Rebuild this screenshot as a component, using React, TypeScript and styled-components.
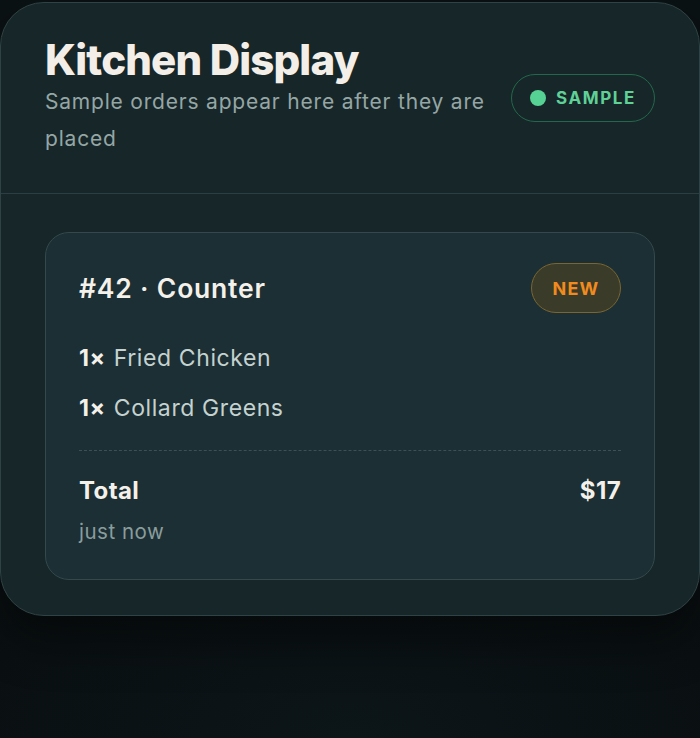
import React from "react";
import styled, { createGlobalStyle } from "styled-components";

const Global = createGlobalStyle`
  html, body { margin: 0; padding: 0; }
  body {
    background: #0a1012;
    font-family: Inter, "Open Sans", sans-serif;
    -webkit-font-smoothing: antialiased;
  }
`;

const Page = styled.div`
  min-height: 738px;
  padding-top: 2px;
  box-sizing: border-box;
  background: radial-gradient(120% 60% at 50% 100%, #0c1518 0%, #090e10 60%, #0b1214 100%);
`;

const Panel = styled.section`
  background: #172629;
  border: 1px solid #2f4245;
  border-radius: 44px;
  overflow: hidden;
  box-shadow: 0 24px 48px rgba(0, 0, 0, 0.45);
`;

const Header = styled.header`
  display: flex;
  align-items: flex-start;
  justify-content: space-between;
  gap: 24px;
  padding: 34px 44px 36px 44px;
  border-bottom: 1px solid #2c3e41;
`;

const TitleBlock = styled.div`
  display: flex;
  flex-direction: column;
  max-width: 450px;
`;

const Title = styled.h1`
  margin: 0;
  font-family: Inter, sans-serif;
  font-weight: 800;
  font-size: 42px;
  line-height: 46px;
  letter-spacing: -0.85px;
  color: #f3efe8;
`;

const Subtitle = styled.p`
  margin: 0;
  font-size: 21px;
  line-height: 37px;
  color: #95a6a5;
  letter-spacing: 0.8px;
`;

const SampleBadge = styled.div`
  display: flex;
  align-items: center;
  gap: 10px;
  margin-top: 37px;
  height: 46px;
  padding: 0 18px 0 18px;
  border: 1.5px solid #23684a;
  border-radius: 999px;
  color: #5fd197;
  font-weight: 700;
  font-size: 17px;
  letter-spacing: 1.6px;
  white-space: nowrap;
`;

const Dot = styled.span`
  width: 16px;
  height: 16px;
  border-radius: 50%;
  background: #56d294;
`;

const Body = styled.div`
  padding: 38px 44px 35px 44px;
`;

const Card = styled.article`
  background: #1c2f34;
  border: 1px solid #35494c;
  border-radius: 24px;
  padding: 30px 33px 34px 33px;
  display: flex;
  flex-direction: column;
`;

const CardHead = styled.div`
  display: flex;
  align-items: center;
  justify-content: space-between;
  margin-bottom: 30px;
`;

const OrderTitle = styled.h2`
  margin: 0;
  font-size: 26.5px;
  font-weight: 600;
  color: #f4f1ea;
  letter-spacing: 0.8px;
`;

const NewBadge = styled.span`
  display: inline-flex;
  align-items: center;
  justify-content: center;
  width: 90px;
  height: 50px;
  box-sizing: border-box;
  border-radius: 999px;
  background: #3b3b29;
  border: 1.5px solid #7a6630;
  color: #f28b1e;
  font-weight: 700;
  font-size: 18px;
  letter-spacing: 1.2px;
`;

const Items = styled.ul`
  list-style: none;
  margin: 0;
  padding: 0 0 27px 0;
  display: flex;
  flex-direction: column;
  gap: 20px;
  border-bottom: 1.5px dashed #3c5154;
`;

const Item = styled.li`
  font-size: 23px;
  line-height: 30px;
  color: #c4d2d0;
  letter-spacing: 0.6px;
`;

const Qty = styled.b`
  font-weight: 700;
  color: #f4f1ea;
  margin-right: 8px;
`;

const TotalRow = styled.div`
  display: flex;
  justify-content: space-between;
  align-items: center;
  margin-top: 25px;
  font-size: 24px;
  line-height: 30px;
  font-weight: 700;
  color: #f4f1ea;
  letter-spacing: 0.4px;
`;

const Time = styled.div`
  margin-top: 13px;
  font-size: 20.5px;
  line-height: 26px;
  color: #8a9d9c;
  letter-spacing: 0.5px;
`;

export default function App() {
  return (
    <>
      <Global />
      <Page>
        <Panel>
          <Header>
            <TitleBlock>
              <Title>Kitchen Display</Title>
              <Subtitle>Sample orders appear here after they are placed</Subtitle>
            </TitleBlock>
            <SampleBadge>
              <Dot />
              SAMPLE
            </SampleBadge>
          </Header>
          <Body>
            <Card>
              <CardHead>
                <OrderTitle>#42 · Counter</OrderTitle>
                <NewBadge>NEW</NewBadge>
              </CardHead>
              <Items>
                <Item>
                  <Qty>1×</Qty>Fried Chicken
                </Item>
                <Item>
                  <Qty>1×</Qty>Collard Greens
                </Item>
              </Items>
              <TotalRow>
                <span>Total</span>
                <span>$17</span>
              </TotalRow>
              <Time>just now</Time>
            </Card>
          </Body>
        </Panel>
      </Page>
    </>
  );
}
